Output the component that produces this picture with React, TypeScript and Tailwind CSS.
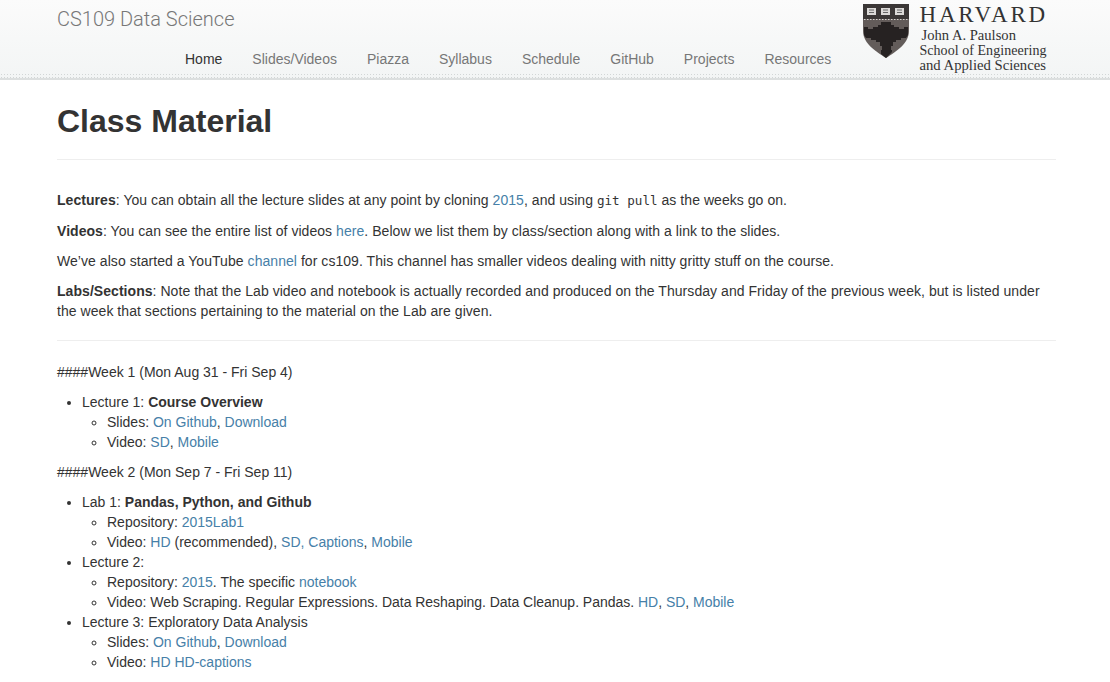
import React from 'react';

const navItems = ['Home', 'Slides/Videos', 'Piazza', 'Syllabus', 'Schedule', 'GitHub', 'Projects', 'Resources'];

const A: React.FC<{ children: React.ReactNode }> = ({ children }) => (
  <a href="#" className="text-[#4680a8]">{children}</a>
);

const Shield = () => (
  <svg width="46" height="54" viewBox="0 0 46 54" className="shrink-0">
    <path d="M0 0H46V27C46 39 34 47 23 54C12 47 0 39 0 27Z" fill="#635c5a" />
    <path d="M0 0H46V15H0Z" fill="#3b3736" />
    <path d="M1 15.500H45" stroke="#d8d4d0" strokeWidth="1" strokeDasharray="1.500 1.500" />
    <rect x="4" y="4" width="9" height="7" fill="#dcdad8" />
    <rect x="18" y="4" width="9" height="7" fill="#dcdad8" />
    <rect x="32" y="4" width="9" height="7" fill="#dcdad8" />
    <path d="M6 6H11M6 8.500H11M20 6H25M20 8.500H25M34 6H39M34 8.500H39" stroke="#666" strokeWidth="1" />
    <path
      d="M18 18H28V21H31V23H36V25H41V23H45L45 31L43 34H38V36H33V38H30V42H28V46H29V48L23 54L18 50V46H19V42H17V38H13V36H8V34H3L1 31V23H5V25H10V23H15V21H18Z"
      fill="#262222"
    />
  </svg>
);

const App: React.FC = () => {
  return (
    <div className="h-[682px] overflow-hidden bg-white font-['Liberation_Sans',Arial,sans-serif] text-[14px] leading-[20px] text-[#333]">
      <header className="relative flex h-[80px] justify-between border-b-2 border-[#dcdfdf] bg-gradient-to-b from-[#fbfbfb] to-[#f3f5f5] pl-[57px] pr-[61px]">
        <div className="absolute inset-x-0 bottom-0 h-[5px] bg-[radial-gradient(circle,#d2d6d6_0.6px,transparent_0.7px)] bg-[length:3px_3px]" />
        <div>
          <div className="mt-[7px] font-['Roboto',sans-serif] text-[20px] font-light leading-[24px] text-[#777]">CS109 Data Science</div>
          <nav className="ml-[128px] mt-[18px] flex gap-[30px] text-[#777]">
            {navItems.map(item => (
              <a key={item} href="#" className={item === 'Home' ? 'text-[#333]' : 'text-[#777]'}>{item}</a>
            ))}
          </nav>
        </div>
        <div className="mr-[1px] flex gap-[10px] pt-[4px]">
          <Shield />
          <div className="font-['Liberation_Serif',serif] text-[14px] leading-[15px] text-[#333]">
            <div className="mb-[2px] pt-[1px] text-[23px] leading-[20px] tracking-[2.800px]">HARVARD</div>
            <div className="ml-[2px] text-[14.600px] leading-[16px]">John A. Paulson</div>
            <div className="tracking-[0.05px]">School of Engineering</div>
            <div className="text-[14.700px] leading-[14px]">and Applied Sciences</div>
          </div>
        </div>
      </header>

      <main className="pl-[57px] pr-[54px]">
        <h1 className="mb-[18px] mt-[21px] text-[32px] font-bold leading-[40px]">Class Material</h1>
        <hr className="border-[#eee]" />
        <div className="mt-[30px] space-y-[10px] tracking-[0.05px]">
          <p><b>Lectures</b>: You can obtain all the lecture slides at any point by cloning <A>2015</A>, and using <code className="font-['DejaVu_Sans_Mono',monospace] text-[12.600px] tracking-normal">git pull</code> as the weeks go on.</p>
          <p><b>Videos</b>: You can see the entire list of videos <A>here</A>. Below we list them by class/section along with a link to the slides.</p>
          <p>We’ve also started a YouTube <A>channel</A> for cs109. This channel has smaller videos dealing with nitty gritty stuff on the course.</p>
          <p><b>Labs/Sections</b>: Note that the Lab video and notebook is actually recorded and produced on the Thursday and Friday of the previous week, but is listed under the week that sections pertaining to the material on the Lab are given.</p>
        </div>
        <hr className="mb-[21px] mt-[19px] border-[#eee]" />

        <p className="mb-[10px]">####Week 1 (Mon Aug 31 - Fri Sep 4)</p>
        <ul className="mb-[10px] list-disc pl-[25px]">
          <li>Lecture 1: <b>Course Overview</b>
            <ul className="list-[circle] pl-[25px]">
              <li>Slides: <A>On Github</A>, <A>Download</A></li>
              <li>Video: <A>SD</A>, <A>Mobile</A></li>
            </ul>
          </li>
        </ul>

        <p className="mb-[10px]">####Week 2 (Mon Sep 7 - Fri Sep 11)</p>
        <ul className="list-disc pl-[25px]">
          <li>Lab 1: <b>Pandas, Python, and Github</b>
            <ul className="list-[circle] pl-[25px]">
              <li>Repository: <A>2015Lab1</A></li>
              <li>Video: <A>HD</A> (recommended), <A>SD, Captions</A>, <A>Mobile</A></li>
            </ul>
          </li>
          <li>Lecture 2:
            <ul className="list-[circle] pl-[25px]">
              <li>Repository: <A>2015</A>. The specific <A>notebook</A></li>
              <li className="tracking-[-0.02px]">Video: Web Scraping. Regular Expressions. Data Reshaping. Data Cleanup. Pandas. <A>HD</A>, <A>SD</A>, <A>Mobile</A></li>
            </ul>
          </li>
          <li>Lecture 3: Exploratory Data Analysis
            <ul className="list-[circle] pl-[25px]">
              <li>Slides: <A>On Github</A>, <A>Download</A></li>
              <li>Video: <A>HD</A> <A>HD-captions</A></li>
            </ul>
          </li>
        </ul>
      </main>
    </div>
  );
};

export default App;
